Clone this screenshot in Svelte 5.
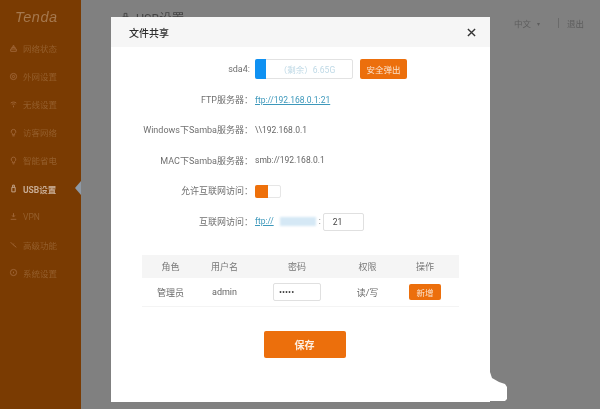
<script>
  const nav = [
    { label: '网络状态', icon: 'M3 9h10v4H3zM5 9V6h6v3M7 6V3h2v3' },
    { label: '外网设置', icon: 'M8 2.5a5.5 5.5 0 1 0 0 11 5.5 5.5 0 0 0 0-11zM8 6a2 2 0 1 0 0 4 2 2 0 0 0 0-4z' },
    { label: '无线设置', icon: 'M3 5.5c3-2.5 7-2.5 10 0M5 8c2-1.5 4-1.5 6 0M8 10v3' },
    { label: '访客网络', icon: 'M8 2.5a4 4 0 0 0-2 7.5v2h4v-2a4 4 0 0 0-2-7.5zM6 14h4' },
    { label: '智能省电', icon: 'M8 2a4 4 0 0 0-2 7.5V12h4V9.5A4 4 0 0 0 8 2zM6.5 14h3' },
    { label: 'USB设置', icon: 'M5 6h6v8H5zM6.5 6V2h3v4', active: true },
    { label: 'VPN', icon: 'M8 2v6M5.5 6 8 9l2.5-3M3 13h10' },
    { label: '高级功能', icon: 'M3 4l4 4 1.5-1.5M7 8l6 5' },
    { label: '系统设置', icon: 'M8 2.5a5.5 5.5 0 1 0 0 11 5.5 5.5 0 0 0 0-11zM8 6.5v3' }
  ];
</script>

<div class="page">
  <aside class="sidebar">
    <div class="logo">Tenda</div>
    <nav>
      {#each nav as item}
        <div class="nav-item" class:active={item.active}>
          <svg viewBox="0 0 16 16" width="9" height="9"><path d={item.icon} /></svg>
          <span>{item.label}</span>
        </div>
      {/each}
    </nav>
    <i class="arrow"></i>
  </aside>

  <main class="main">
    <header class="topbar">
      <div class="page-title">
        <svg viewBox="0 0 16 16" width="11" height="11"><path d="M4 7h8v7H4zM6 7V2h4v5" /></svg>
        <span>USB设置</span>
      </div>
      <div class="top-links">
        <span>中文</span><span class="caret">▾</span><span class="sep"></span><span>退出</span>
      </div>
    </header>
  </main>

  <section class="modal">
    <div class="modal-head">
      <h2>文件共享</h2>
      <svg viewBox="0 0 10 10" width="9" height="9"><path d="M1 1l8 8M9 1l-8 8" /></svg>
    </div>
    <div class="modal-body">
      <div class="form">
        <div class="row">
          <label class="plain">sda4:</label>
          <div class="disk"><b></b><span>（剩余）6.65G</span></div>
          <button class="btn eject">安全弹出</button>
        </div>
        <div class="row"><label>FTP服务器：</label><a>ftp://192.168.0.1:21</a></div>
        <div class="row"><label>Windows下Samba服务器：</label><span>\\192.168.0.1</span></div>
        <div class="row"><label>MAC下Samba服务器：</label><span>smb://192.168.0.1</span></div>
        <div class="row">
          <label>允许互联网访问：</label>
          <div class="toggle"><b></b></div>
        </div>
        <div class="row">
          <label>互联网访问：</label>
          <a>ftp://</a><i class="smudge"></i><span class="colon">:</span>
          <div class="field port">21</div>
        </div>
      </div>

      <div class="table">
        <div class="tr th"><span>角色</span><span>用户名</span><span>密码</span><span>权限</span><span>操作</span></div>
        <div class="tr td">
          <span>管理员</span><span>admin</span>
          <span><div class="field pwd">•••••</div></span>
          <span>读/写</span>
          <span><button class="btn add">新增</button></span>
        </div>
      </div>

      <button class="btn save">保存</button>
    </div>
    <i class="blot"></i>
  </section>
</div>

<style>
  :global(body) { margin: 0; }
  .page {
    position: relative;
    display: flex;
    width: 600px;
    height: 409px;
    overflow: hidden;
    background: #808080;
    font-family: Roboto, "Noto Sans CJK SC", sans-serif;
    font-size: 8.5px;
    color: #666;
    filter: blur(0.35px);
  }
  .sidebar {
    position: relative;
    width: 81px;
    flex: none;
    background: #7a3b02;
  }
  .logo {
    box-sizing: border-box;
    height: 34px;
    padding-left: 15px;
    display: flex;
    align-items: center;
    font: italic 400 14.5px "Liberation Sans", sans-serif;
    letter-spacing: 0.6px;
    color: #a5784e;
  }
  nav { display: flex; flex-direction: column; }
  .nav-item {
    display: flex;
    align-items: center;
    gap: 5px;
    height: 28.1px;
    padding-left: 9px;
    font-size: 8.5px;
    color: #945e2c;
  }
  .nav-item svg { fill: none; stroke: #a0683a; stroke-width: 1.6; }
  .nav-item.active { color: #c8ac94; font-weight: 700; }
  .nav-item.active svg { stroke: #c8ac94; }
  .arrow {
    position: absolute;
    right: 0;
    top: 181px;
    border: 7px solid transparent;
    border-left: 0;
    border-right: 6px solid #8d99a6;
  }
  .main { flex: 1; }
  .topbar {
    display: flex;
    justify-content: space-between;
    padding: 9px 16px 0 39px;
    color: #454545;
  }
  .page-title { display: flex; align-items: center; gap: 5px; font-size: 12.5px; height: 16px; }
  .page-title svg { fill: none; stroke: #454545; stroke-width: 1.4; }
  .top-links { display: flex; align-items: center; gap: 6px; font-size: 8.5px; color: #5d5d5d; padding-top: 8px; }
  .caret { font-size: 6px; }
  .sep { width: 1px; height: 10px; background: #6a6a6a; margin: 0 2px 0 12px; }
  .modal {
    position: absolute;
    left: 111px;
    top: 17px;
    width: 379px;
    height: 385px;
    background: #fff;
  }
  .modal-head {
    display: flex;
    align-items: center;
    justify-content: space-between;
    height: 30px;
    padding: 0 14px 0 18px;
    background: #f6f6f6;
  }
  .modal-head h2 { margin: 0; font-size: 10px; font-weight: 500; color: #2c2c2c; }
  .modal-head svg { fill: none; stroke: #333; stroke-width: 1.5; }
  .modal-body { display: flex; flex-direction: column; align-items: center; }
  .form { align-self: stretch; padding-top: 7px; }
  .row {
    display: flex;
    align-items: center;
    height: 30.4px;
    color: #666;
  }
  .row label { width: 142px; margin-right: 2px; text-align: right; white-space: nowrap; font-size: 9px; color: #707070; }
  .row label.plain { width: 139px; margin-right: 5px; }
  .row a { color: #3d98bb; text-decoration: underline; }
  .disk {
    position: relative;
    box-sizing: border-box;
    display: flex;
    align-items: center;
    justify-content: center;
    width: 98px;
    height: 20px;
    padding-left: 6px;
    border: 1px solid #e2e2e2;
    border-radius: 2px;
    color: #bfd9e6;
  }
  .disk b {
    position: absolute;
    left: -1px;
    top: -1px;
    bottom: -1px;
    width: 11px;
    background: #0f91f2;
    border-radius: 2px 0 0 2px;
  }
  .btn {
    border: 0;
    padding: 0;
    background: #ec6f0c;
    color: #fbe4cf;
    font: inherit;
    border-radius: 2px;
  }
  .eject { width: 47px; height: 20px; margin-left: 7px; }
  .toggle {
    box-sizing: border-box;
    width: 26px;
    height: 13px;
    margin-top: 2px;
    border: 1px solid #e6e6e6;
    border-radius: 2px;
  }
  .toggle b { display: block; width: 13px; height: 13px; margin: -1px; background: #ee700a; border-radius: 2px 0 0 2px; }
  .smudge { width: 36px; height: 9px; margin-left: 6px; background: #d5e8f5; filter: blur(1px); }
  .colon { margin: 0 2px 0 3px; }
  .field {
    box-sizing: border-box;
    display: flex;
    align-items: center;
    border: 1px solid #e0e0e0;
    border-radius: 2px;
    background: #fff;
    color: #444;
  }
  .port { width: 41px; height: 18px; padding-left: 9px; margin-top: 1px; }
  .table { width: 317px; margin-top: 19px; border-bottom: 1px solid #f4f4f4; font-size: 9px; }
  .tr { display: grid; grid-template-columns: 57px 51px 94px 47px 68px; align-items: center; text-align: center; }
  .tr > span { display: flex; justify-content: center; align-items: center; }
  .th { height: 23px; background: #f5f5f5; color: #777; }
  .td { height: 28px; color: #666; }
  .pwd { width: 48px; height: 18px; padding-left: 5px; font-size: 9px; }
  .add { width: 32px; height: 16px; font-size: 8.5px; }
  .save {
    width: 82px;
    height: 27px;
    margin: 24px 0 0 8px;
    font-family: "Noto Sans CJK SC", sans-serif;
    font-size: 10px;
    font-weight: 700;
    color: #fdeee0;
  }
  .blot {
    position: absolute;
    left: 379px;
    top: 355px;
    width: 17px;
    height: 29px;
    background: #fff;
    clip-path: polygon(0 0, 2px 6px, 9px 10px, 15px 12px, 17px 15px, 17px 27px, 15px 29px, 0 29px);
  }
</style>
